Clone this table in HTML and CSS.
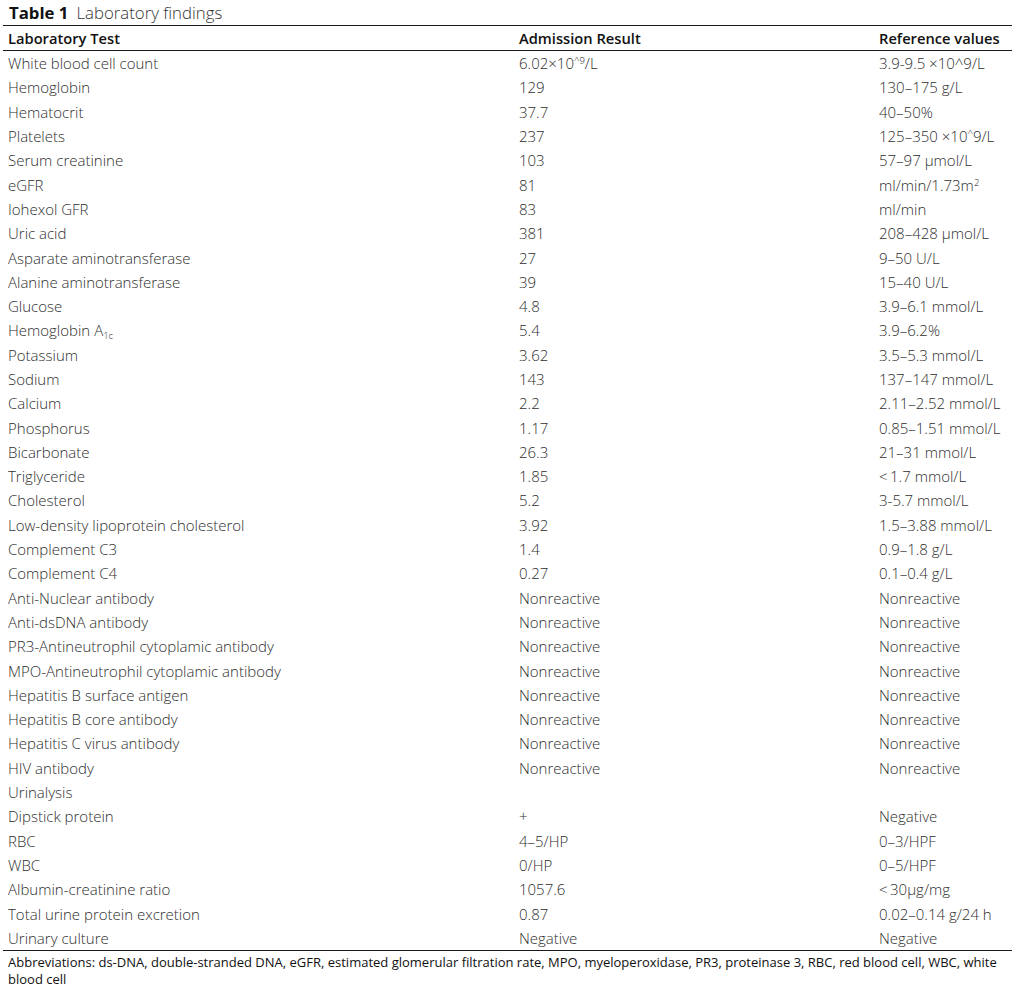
FILE: index.html
```html
<!DOCTYPE html>
<html lang="en">
<head>
<meta charset="utf-8">
<title>Table 1 Laboratory findings</title>
<link rel="stylesheet" href="styles.css">
</head>
<body>
<div class="page">
  <div class="caption"><span class="cap-label">Table 1</span><span class="cap-title">Laboratory findings</span></div>
  <table class="lab">
    <colgroup><col class="c1"><col class="c2"><col class="c3"></colgroup>
    <thead>
      <tr><th>Laboratory Test</th><th>Admission Result</th><th>Reference values</th></tr>
    </thead>
    <tbody>
      <tr><td>White blood cell count</td><td>6.02×10<sup>^9</sup>/L</td><td>3.9-9.5 ×10^9/L</td></tr>
      <tr><td>Hemoglobin</td><td>129</td><td>130–175 g/L</td></tr>
      <tr><td>Hematocrit</td><td>37.7</td><td>40–50%</td></tr>
      <tr><td>Platelets</td><td>237</td><td>125–350 ×10<sup>^</sup>9/L</td></tr>
      <tr><td>Serum creatinine</td><td>103</td><td>57–97 μmol/L</td></tr>
      <tr><td>eGFR</td><td>81</td><td>ml/min/1.73m<sup>2</sup></td></tr>
      <tr><td>Iohexol GFR</td><td>83</td><td>ml/min</td></tr>
      <tr><td>Uric acid</td><td>381</td><td>208–428 μmol/L</td></tr>
      <tr><td>Asparate aminotransferase</td><td>27</td><td>9–50 U/L</td></tr>
      <tr><td>Alanine aminotransferase</td><td>39</td><td>15–40 U/L</td></tr>
      <tr><td>Glucose</td><td>4.8</td><td>3.9–6.1 mmol/L</td></tr>
      <tr><td>Hemoglobin A<sub>1c</sub></td><td>5.4</td><td>3.9–6.2%</td></tr>
      <tr><td>Potassium</td><td>3.62</td><td>3.5–5.3 mmol/L</td></tr>
      <tr><td>Sodium</td><td>143</td><td>137–147 mmol/L</td></tr>
      <tr><td>Calcium</td><td>2.2</td><td>2.11–2.52 mmol/L</td></tr>
      <tr><td>Phosphorus</td><td>1.17</td><td>0.85–1.51 mmol/L</td></tr>
      <tr><td>Bicarbonate</td><td>26.3</td><td>21–31 mmol/L</td></tr>
      <tr><td>Triglyceride</td><td>1.85</td><td>&lt;&#8201;1.7 mmol/L</td></tr>
      <tr><td>Cholesterol</td><td>5.2</td><td>3-5.7 mmol/L</td></tr>
      <tr><td>Low-density lipoprotein cholesterol</td><td>3.92</td><td>1.5–3.88 mmol/L</td></tr>
      <tr><td>Complement C3</td><td>1.4</td><td>0.9–1.8 g/L</td></tr>
      <tr><td>Complement C4</td><td>0.27</td><td>0.1–0.4 g/L</td></tr>
      <tr><td>Anti-Nuclear antibody</td><td>Nonreactive</td><td>Nonreactive</td></tr>
      <tr><td>Anti-dsDNA antibody</td><td>Nonreactive</td><td>Nonreactive</td></tr>
      <tr><td>PR3-Antineutrophil cytoplamic antibody</td><td>Nonreactive</td><td>Nonreactive</td></tr>
      <tr><td>MPO-Antineutrophil cytoplamic antibody</td><td>Nonreactive</td><td>Nonreactive</td></tr>
      <tr><td>Hepatitis B surface antigen</td><td>Nonreactive</td><td>Nonreactive</td></tr>
      <tr><td>Hepatitis B core antibody</td><td>Nonreactive</td><td>Nonreactive</td></tr>
      <tr><td>Hepatitis C virus antibody</td><td>Nonreactive</td><td>Nonreactive</td></tr>
      <tr><td>HIV antibody</td><td>Nonreactive</td><td>Nonreactive</td></tr>
      <tr><td>Urinalysis</td><td></td><td></td></tr>
      <tr><td>Dipstick protein</td><td>+</td><td>Negative</td></tr>
      <tr><td>RBC</td><td>4–5/HP</td><td>0–3/HPF</td></tr>
      <tr><td>WBC</td><td>0/HP</td><td>0–5/HPF</td></tr>
      <tr><td>Albumin-creatinine ratio</td><td>1057.6</td><td>&lt;&#8201;30μg/mg</td></tr>
      <tr><td>Total urine protein excretion</td><td>0.87</td><td>0.02–0.14 g/24 h</td></tr>
      <tr><td>Urinary culture</td><td>Negative</td><td>Negative</td></tr>
    </tbody>
  </table>
  <p class="foot">Abbreviations: ds-DNA, double-stranded DNA, eGFR, estimated glomerular filtration rate, MPO, myeloperoxidase, PR3, proteinase 3, RBC, red blood cell, WBC, white blood cell</p>
</div>
</body>
</html>
```

FILE: styles.css
```css
html, body {
  margin: 0;
  padding: 0;
  background: #ffffff;
}

.page {
  width: 1009px;
  padding-left: 3px;
  font-family: "Open Sans", "Noto Sans", sans-serif;
  color: #2a2a2a;
}

.caption {
  height: 26px;
  display: flex;
  align-items: center;
  gap: 8px;
  padding-left: 6px;
  font-size: 16.8px;
  line-height: 20px;
  border-bottom: 1px solid #1a1a1a;
  box-sizing: border-box;
  padding-top: 1px;
}

.cap-label {
  font-weight: 700;
  color: #111;
}

.cap-title {
  font-weight: 300;
  color: #333;
}

.lab {
  width: 1009px;
  border-collapse: collapse;
  table-layout: fixed;
  font-size: 15px;
}

.c1 { width: 511px; }
.c2 { width: 360px; }
.c3 { width: 138px; }

.lab th {
  text-align: left;
  font-weight: 600;
  font-size: 14.7px;
  color: #111;
  height: 24px;
  padding: 0 0 0 5px;
  border-bottom: 1px solid #1a1a1a;
  line-height: 20px;
}

.lab td {
  height: 24.3px;
  padding: 0 0 0 5px;
  font-weight: 300;
  color: #2e2e2e;
  white-space: nowrap;
  line-height: 20px;
}

.lab tbody tr:last-child td {
  border-bottom: 1px solid #1a1a1a;
}

.lab sup {
  font-size: 9.5px;
  line-height: 0;
  vertical-align: 5px;
}

.lab sub {
  font-size: 9.5px;
  line-height: 0;
  vertical-align: -3px;
}

.foot {
  margin: 3px 0 0 0;
  padding-left: 5px;
  font-size: 13px;
  line-height: 17px;
  color: #111;
  letter-spacing: 0;
  word-spacing: 0;
}
```
